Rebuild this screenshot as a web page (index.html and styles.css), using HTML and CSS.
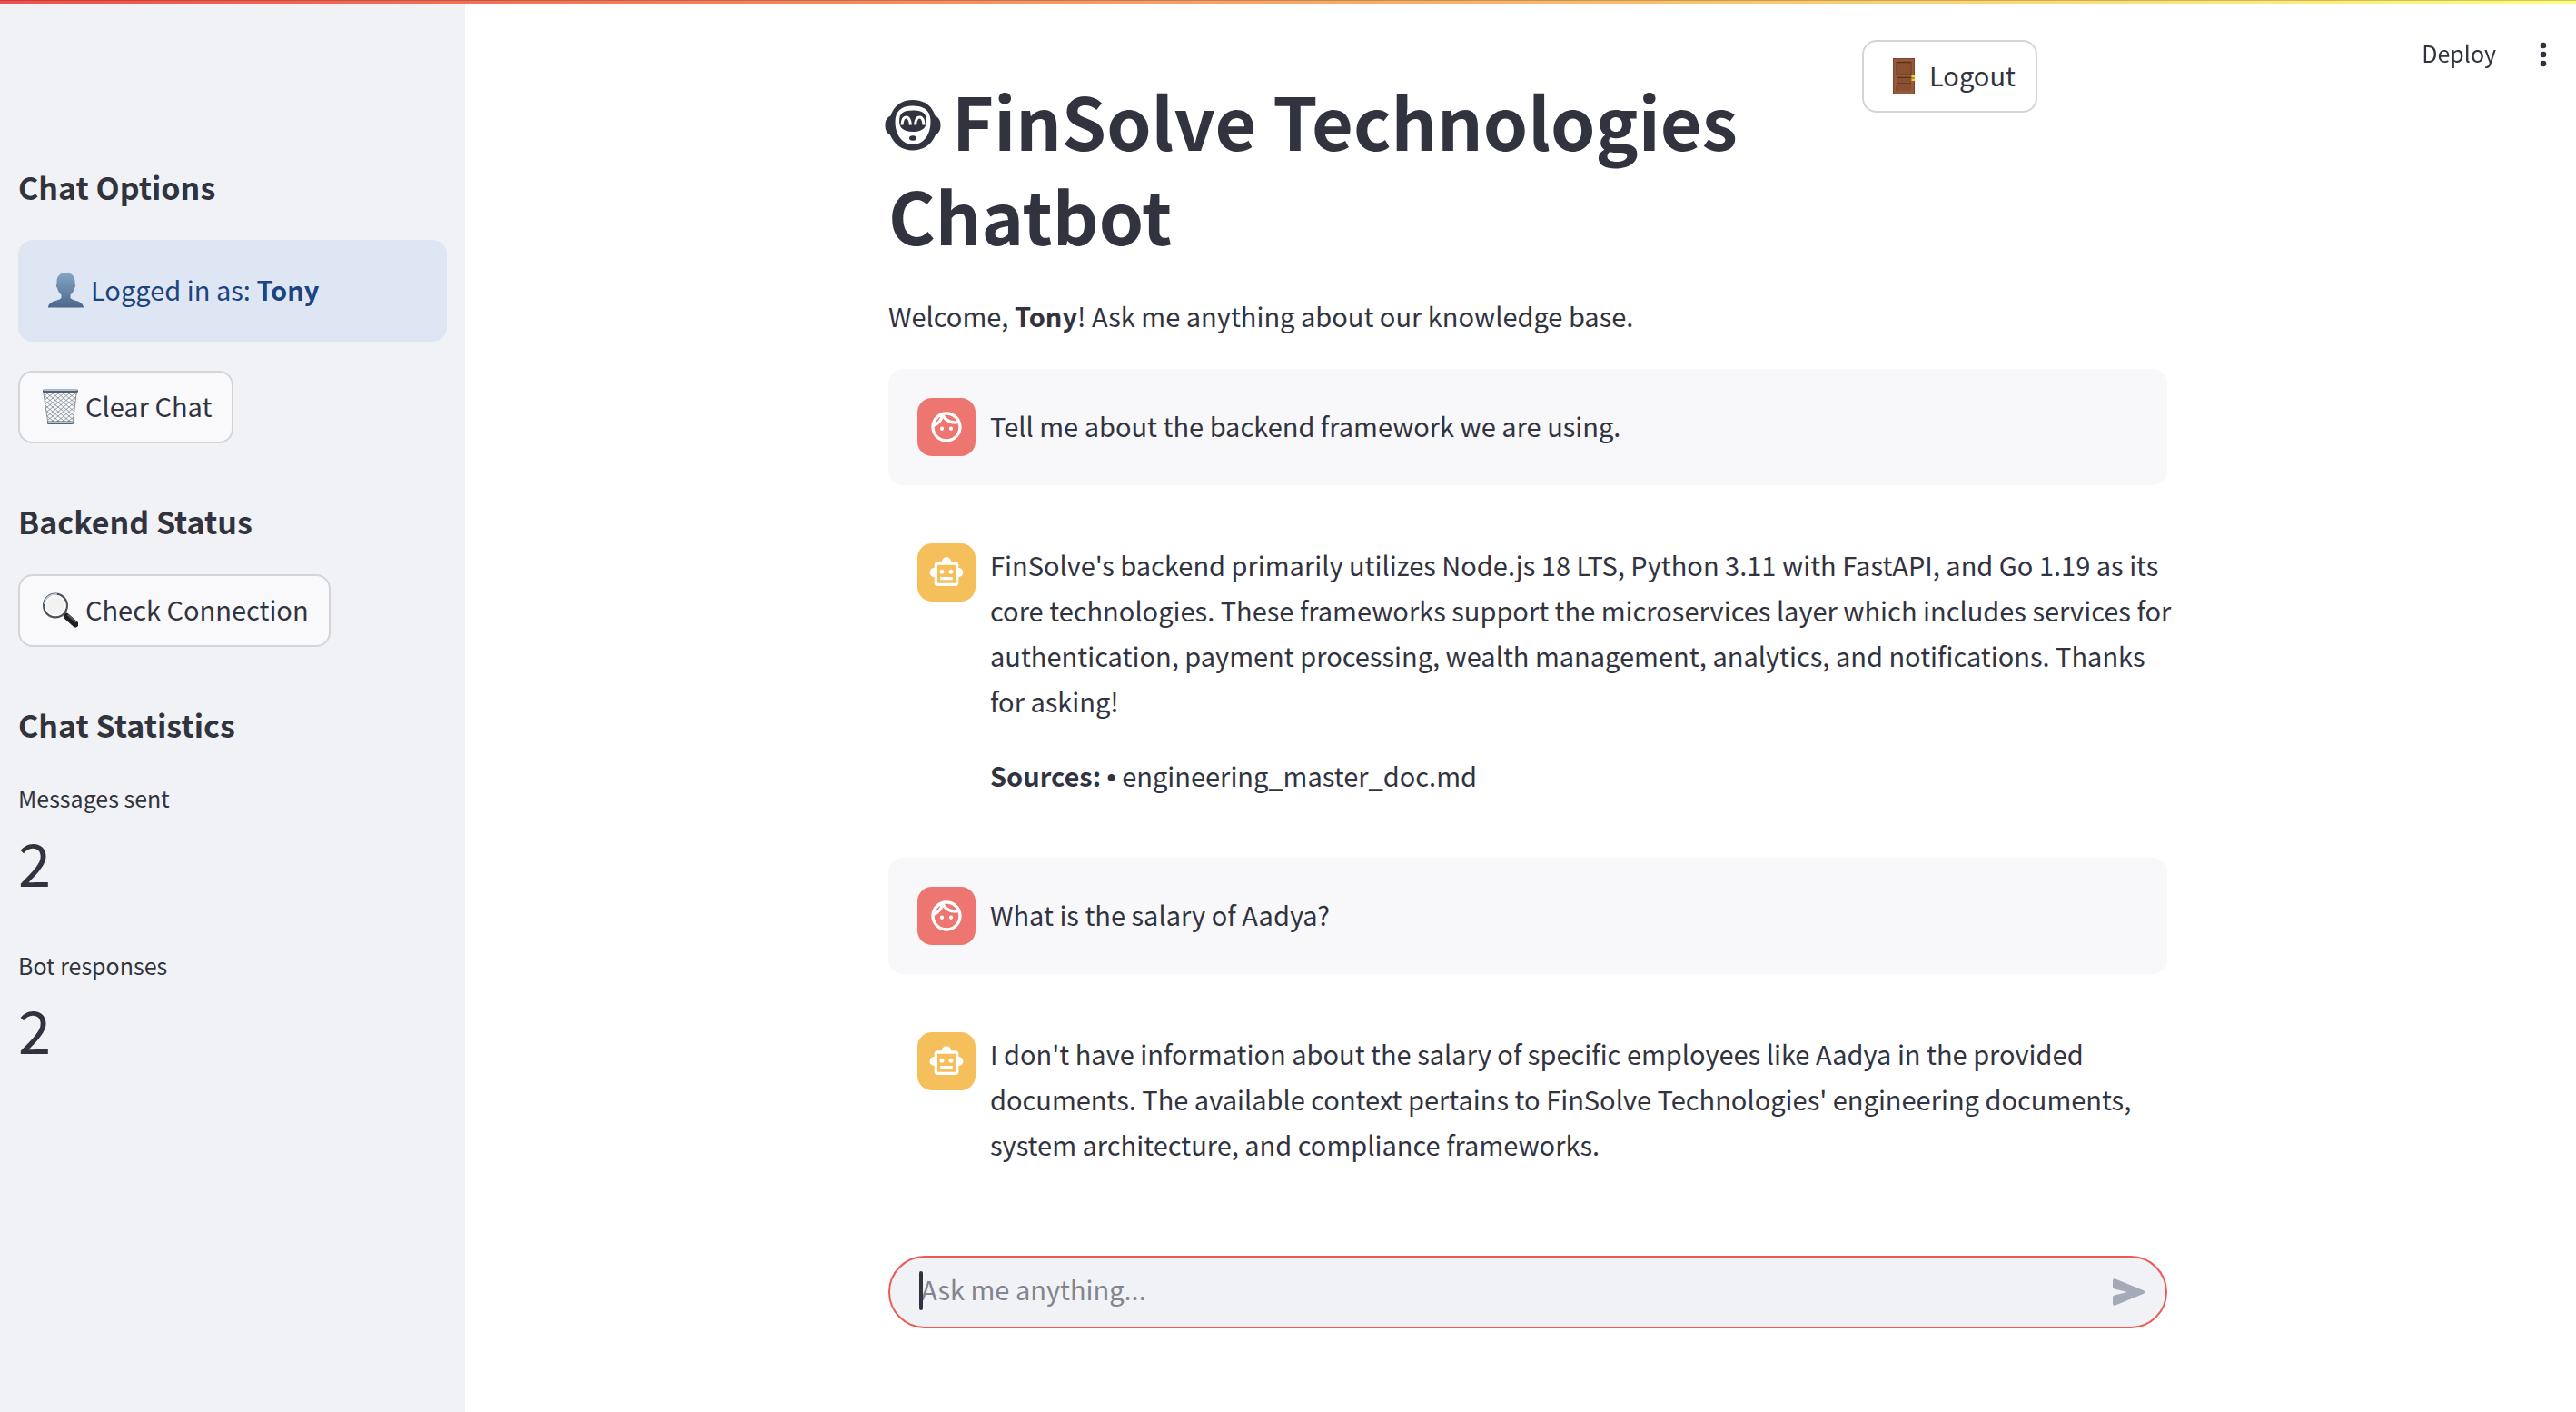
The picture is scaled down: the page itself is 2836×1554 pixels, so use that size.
FILE: index.html
```html
<!DOCTYPE html>
<html lang="en">
<head>
<meta charset="utf-8">
<title>FinSolve Technologies Chatbot</title>
<link rel="stylesheet" href="styles.css">
</head>
<body>
<svg class="defs" aria-hidden="true">
  <symbol id="face" viewBox="0 0 24 24"><path d="M10.25 13c0 .69-.56 1.25-1.25 1.25S7.750 13.690 7.750 13s.56-1.250 1.250-1.250 1.250.56 1.250 1.250zM15 11.750c-.69 0-1.250.56-1.250 1.250s.56 1.250 1.250 1.250 1.250-.56 1.250-1.250-.56-1.250-1.250-1.250zm7 .25c0 5.520-4.480 10-10 10S2 17.520 2 12 6.480 2 12 2s10 4.480 10 10zM10.660 4.120C12.060 6.440 14.600 8 17.500 8c.46 0 .91-.05 1.340-.12C17.440 5.560 14.900 4 12 4c-.46 0-.91.05-1.340.12zM4.420 9.470c1.710-.97 3.030-2.550 3.660-4.440C6.370 6 5.050 7.580 4.420 9.470zM20 12c0-.78-.12-1.530-.33-2.240-.7.15-1.420.24-2.170.24-3.130 0-5.920-1.440-7.760-3.690C8.690 8.870 6.600 10.880 4 11.860c.01.04 0 .09 0 .14 0 4.420 3.580 8 8 8s8-3.580 8-8z"/></symbol>
  <symbol id="bot" viewBox="0 0 24 24"><path d="M20 9V7c0-1.100-.9-2-2-2h-3c0-1.660-1.340-3-3-3S9 3.340 9 5H6c-1.100 0-2 .9-2 2v2c-1.660 0-3 1.340-3 3s1.340 3 3 3v4c0 1.100.9 2 2 2h12c1.100 0 2-.9 2-2v-4c1.660 0 3-1.340 3-3s-1.340-3-3-3zm-2 10H6V7h12v12zm-9-6c-.83 0-1.500-.67-1.500-1.500S8.170 10 9 10s1.500.67 1.500 1.500S9.830 13 9 13zm7.500-1.500c0 .83-.67 1.500-1.500 1.500s-1.500-.67-1.500-1.500.67-1.500 1.500-1.500 1.500.67 1.500 1.500zM8 15h8v2H8v-2z"/></symbol>
</svg>

<div class="decoration"></div>
<header class="toolbar">
  <button class="toolbar-button" type="button"><span>Deploy</span></button>
  <button class="toolbar-button" type="button" aria-label="Menu">
    <svg class="dots" viewBox="0 0 8 28" aria-hidden="true"><circle cx="4" cy="4" r="3.3"/><circle cx="4" cy="14" r="3.3"/><circle cx="4" cy="24" r="3.3"/></svg>
  </button>
</header>

<div class="app">
  <aside class="sidebar">
    <section class="group">
      <h3>Chat Options</h3>
      <div class="info">
        <svg class="emoji" viewBox="0 0 40 40" aria-hidden="true">
          <defs><linearGradient id="bust" x1="0" y1="0" x2="0" y2="1"><stop offset="0" stop-color="#85a6c4"/><stop offset="1" stop-color="#4c678a"/></linearGradient></defs>
          <path fill="url(#bust)" d="M20.500 0c6 0 10 4 10 9.500v3.500c1 .3 1 2-.7 4.500-.8 3-2 5-4.300 7v3c1 4 14 2.500 14.500 11H1c.5-8.500 13.500-7 14.500-11v-3c-2.300-2-3.500-4-4.300-7-1.700-2.500-1.700-4.200-.7-4.500V9.500C10.500 4 14.500 0 20.500 0z"/>
        </svg>
        <span>Logged in as: <strong>Tony</strong></span>
      </div>
      <button class="button" type="button">
        <svg class="emoji" viewBox="0 0 40 40" aria-hidden="true">
          <defs><pattern id="mesh" width="6" height="5" patternUnits="userSpaceOnUse"><path d="M0 0L6 5M6 0L0 5" fill="none" stroke="#6d7680" stroke-width=".7"/></pattern></defs>
          <path d="M1.500 2h37L34 38H7z" fill="#f8f9fb"/>
          <path d="M1.500 2h37L34 38H7z" fill="url(#mesh)" stroke="#8a929b"/>
          <rect x="1" y=".5" width="39" height="3.500" rx="1.500" fill="#55606c"/><rect x="2" y=".5" width="37" height="1.500" rx=".7" fill="#a9c1da"/>
          <rect x="6" y="35.500" width="29" height="3.500" rx="1.500" fill="#59636f"/><rect x="7" y="36" width="27" height="1.300" fill="#a9c1da"/>
        </svg>
        <span>Clear Chat</span>
      </button>
    </section>

    <section class="group">
      <h3>Backend Status</h3>
      <button class="button" type="button">
        <svg class="emoji" viewBox="0 0 40 40" aria-hidden="true">
          <path d="M24 25l3-3" stroke="#777" stroke-width="3"/>
          <path d="M27.500 26.500l9.500 8.500" stroke="#1d1f22" stroke-width="7" stroke-linecap="round"/>
          <path d="M29 25l8.500 7.500" stroke="#62666b" stroke-width="1.500" stroke-linecap="round"/>
          <circle cx="15" cy="14.500" r="12.800" fill="#f2f2f3" stroke="#4c5258" stroke-width="2.400"/>
          <path d="M2.800 13A12.500 12.500 0 0 1 17 2" fill="none" stroke="#b3cae4" stroke-width="1.600"/>
          <circle cx="15" cy="14.500" r="11" fill="none" stroke="#fff" stroke-width="1.400"/>
        </svg>
        <span>Check Connection</span>
      </button>
    </section>

    <section class="group">
      <h3>Chat Statistics</h3>
      <dl class="stats">
        <div><dt>Messages sent</dt><dd>2</dd></div>
        <div><dt>Bot responses</dt><dd>2</dd></div>
      </dl>
    </section>
  </aside>

  <main class="main">
    <div class="title-row">
      <h1><svg class="logo" viewBox="0 0 62 56" aria-hidden="true">
        <path fill="#31333f" d="M31 0C43 0 52 6 55.500 17.500 60 19.500 61.500 23 61.500 28S60 36 56 38.500C51.500 49 43 55.500 31 55.500S10.500 49 6 38.500C2 36 .5 33 .5 28S2 19.500 6.500 17.500C10 6 19 0 31 0z"/>
        <path fill="#fff" d="M31 6.500c13 0 19.500 6 19.500 17.500C50.500 38 43 49 31 49S11.500 38 11.500 24C11.500 12.500 18 6.500 31 6.500z"/>
        <path fill="#31333f" d="M31 11.500c10 0 15 2.500 15 12C46 31 41 35 31 35s-15-4-15-11.500c0-9.500 5-12 15-12z"/>
        <path fill="none" stroke="#fff" stroke-width="3" d="M19 27.500c.5-11.500 8.500-11.500 9.500 0M33.500 27.500c1-11.500 9-11.500 9.500 0"/>
        <ellipse cx="31" cy="42" rx="4" ry="2.800" fill="#31333f"/>
      </svg>FinSolve Technologies Chatbot</h1>
      <button class="button logout" type="button">
        <svg class="emoji" viewBox="0 0 40 40" aria-hidden="true">
          <rect x="8" y="0" width="24" height="40" fill="#7c4528"/><rect x="9" y="1" width="22" height="38" fill="#96593a"/>
          <rect x="12" y="4" width="16" height="14" fill="#8a5032"/><path d="M12 4.500h16M12 21.500h16M12 29.500h16" stroke="#57301c" stroke-width="1.600"/>
          <rect x="12" y="22" width="16" height="5" fill="#8a5032"/><rect x="12" y="30" width="16" height="6" fill="#8a5032"/>
          <path d="M12 27.500h16M12 18h16M12 4v14M28 4v14M12 30v6" stroke="#6c3c24" stroke-width="1"/>
          <rect x="28.500" y="19" width="3.500" height="6" fill="#e8cf3a"/><path d="M28 22h4" stroke="#7a6510"/>
        </svg>
        <span>Logout</span>
      </button>
    </div>
    <p>Welcome, <strong>Tony</strong>! Ask me anything about our knowledge base.</p>

    <article class="message user">
      <div class="avatar"><svg aria-hidden="true"><use href="#face"/></svg></div>
      <div class="content"><p>Tell me about the backend framework we are using.</p></div>
    </article>
    <article class="message">
      <div class="avatar"><svg aria-hidden="true"><use href="#bot"/></svg></div>
      <div class="content">
        <p>FinSolve's backend primarily utilizes Node.js 18 LTS, Python 3.11 with FastAPI, and Go 1.19 as its core technologies. These frameworks support the microservices layer which includes services for authentication, payment processing, wealth management, analytics, and notifications. Thanks for asking!</p>
        <p><strong>Sources:</strong> <span class="bullet">•</span> engineering_master_doc.md</p>
      </div>
    </article>
    <article class="message user">
      <div class="avatar"><svg aria-hidden="true"><use href="#face"/></svg></div>
      <div class="content"><p>What is the salary of Aadya?</p></div>
    </article>
    <article class="message">
      <div class="avatar"><svg aria-hidden="true"><use href="#bot"/></svg></div>
      <div class="content"><p>I don't have information about the salary of specific employees like Aadya in the provided documents. The available context pertains to FinSolve Technologies' engineering documents, system architecture, and compliance frameworks.</p></div>
    </article>

    <form class="composer">
      <span class="caret"></span>
      <input type="text" aria-label="Ask me anything" placeholder="Ask me anything...">
      <button class="send" type="button" aria-label="Send">
        <svg viewBox="0 0 36 30" aria-hidden="true"><path d="M0 2.500Q0-.6 3 .5L34 13.200Q36.500 15 34 16.800L3 29.500Q0 30.600 0 27.500V20.500Q0 19 1.500 18.600L16 15 1.500 11.400Q0 11 0 9.500z"/></svg>
      </button>
    </form>
  </main>
</div>
</body>
</html>
```
FILE: styles.css
```css
* { box-sizing: border-box; margin: 0; }

body {
  background: #fff;
  color: #31333f;
  font-family: "Noto Sans CJK SC", "Open Sans", sans-serif;
  font-size: 29px;
  line-height: 50px;
}

button, input { font: inherit; color: inherit; }
button { cursor: pointer; }
strong { font-weight: 700; }
p { margin: -2px 0 2px; }
.defs { display: none; }

.decoration {
  position: fixed;
  inset: 0 0 auto;
  z-index: 2;
  height: 4px;
  border-top: 1px solid rgba(0, 0, 0, .2);
  background: linear-gradient(90deg, #f0504c, #fffd80) border-box;
}

.toolbar {
  position: fixed;
  top: 40px;
  right: 32px;
  z-index: 1;
  display: flex;
  align-items: center;
  gap: 48px;
  height: 40px;
}
.toolbar-button {
  display: flex;
  padding: 0;
  border: 0;
  background: none;
  font-size: 25px;
  line-height: 40px;
}
.dots { width: 8px; height: 28px; fill: #31333f; }

.app { display: flex; min-height: 100vh; }

.sidebar {
  flex: 0 0 512px;
  display: flex;
  flex-direction: column;
  gap: 60px;
  padding: 180px 20px 40px;
  background: #f0f2f6;
}
.group {
  display: flex;
  flex-direction: column;
  align-items: flex-start;
  gap: 32px;
}
h3 { font-size: 34px; line-height: 52px; font-weight: 700; }

.info {
  display: flex;
  align-items: center;
  gap: 8px;
  align-self: stretch;
  height: 112px;
  padding: 0 32px;
  border-radius: 16px;
  background: #dee6f3;
  color: #1b4480;
}
.emoji { flex: none; width: 40px; height: 40px; }

.button {
  display: flex;
  align-items: center;
  gap: 8px;
  height: 80px;
  padding: 0 22px 0 24px;
  border: 2px solid #d3d4d9;
  border-radius: 16px;
  background: #f9f9fc;
}
.button span, .info span, .toolbar-button span { padding-bottom: 4px; }
.logout { justify-self: start; background: #fff; }

.stats { display: flex; flex-direction: column; gap: 44px; }
dt { font-size: 25px; line-height: 44px; }
dd { font-size: 65px; line-height: 96px; }

.main {
  flex: 1;
  display: flex;
  flex-direction: column;
  gap: 32px;
  max-width: 1408px;
  margin: 0 auto;
  padding: 44px 0 92px;
  position: relative;
  left: 8px;
}
.title-row {
  display: grid;
  grid-template-columns: 1fr 336px;
}
h1 { margin: 36px 0 4px; font-size: 79px; line-height: 104px; font-weight: 700; }
.logo { width: 62px; height: 56px; margin: 0 12px 0 -4px; }

.message {
  display: flex;
  align-items: flex-start;
  gap: 16px;
  padding: 32px 0 32px 32px;
  border-radius: 16px;
}
.message.user { align-items: center; background: #f8f8fb; }
.avatar {
  flex: none;
  display: flex;
  align-items: center;
  justify-content: center;
  width: 64px;
  height: 64px;
  border-radius: 16px;
  background: #f5c05c;
}
.user .avatar { background: #ed7671; }
.avatar svg { width: 40px; height: 40px; fill: #fff; }
.content {
  flex: 1;
  display: flex;
  flex-direction: column;
  gap: 32px;
  margin-right: -16px;
}
.bullet { font-family: "Liberation Sans", sans-serif; line-height: 1; }

.composer {
  position: relative;
  display: flex;
  align-items: center;
  height: 80px;
  margin-top: auto;
  padding: 0 22px 0 34px;
  border: 2px solid #ed5a54;
  border-radius: 40px;
  background: #f0f2f6;
}
.caret {
  position: absolute;
  left: 32px;
  top: 15px;
  width: 4px;
  height: 43px;
  border-radius: 2px;
  background: #31333f;
}
.composer input {
  flex: 1;
  padding: 0 0 8px;
  border: 0;
  outline: 0;
  background: none;
}
.composer input::placeholder { color: #83848d; opacity: 1; }
.send { display: flex; padding: 0; border: 0; background: none; }
.send svg { width: 36px; height: 30px; fill: #a6a9b8; }
```
